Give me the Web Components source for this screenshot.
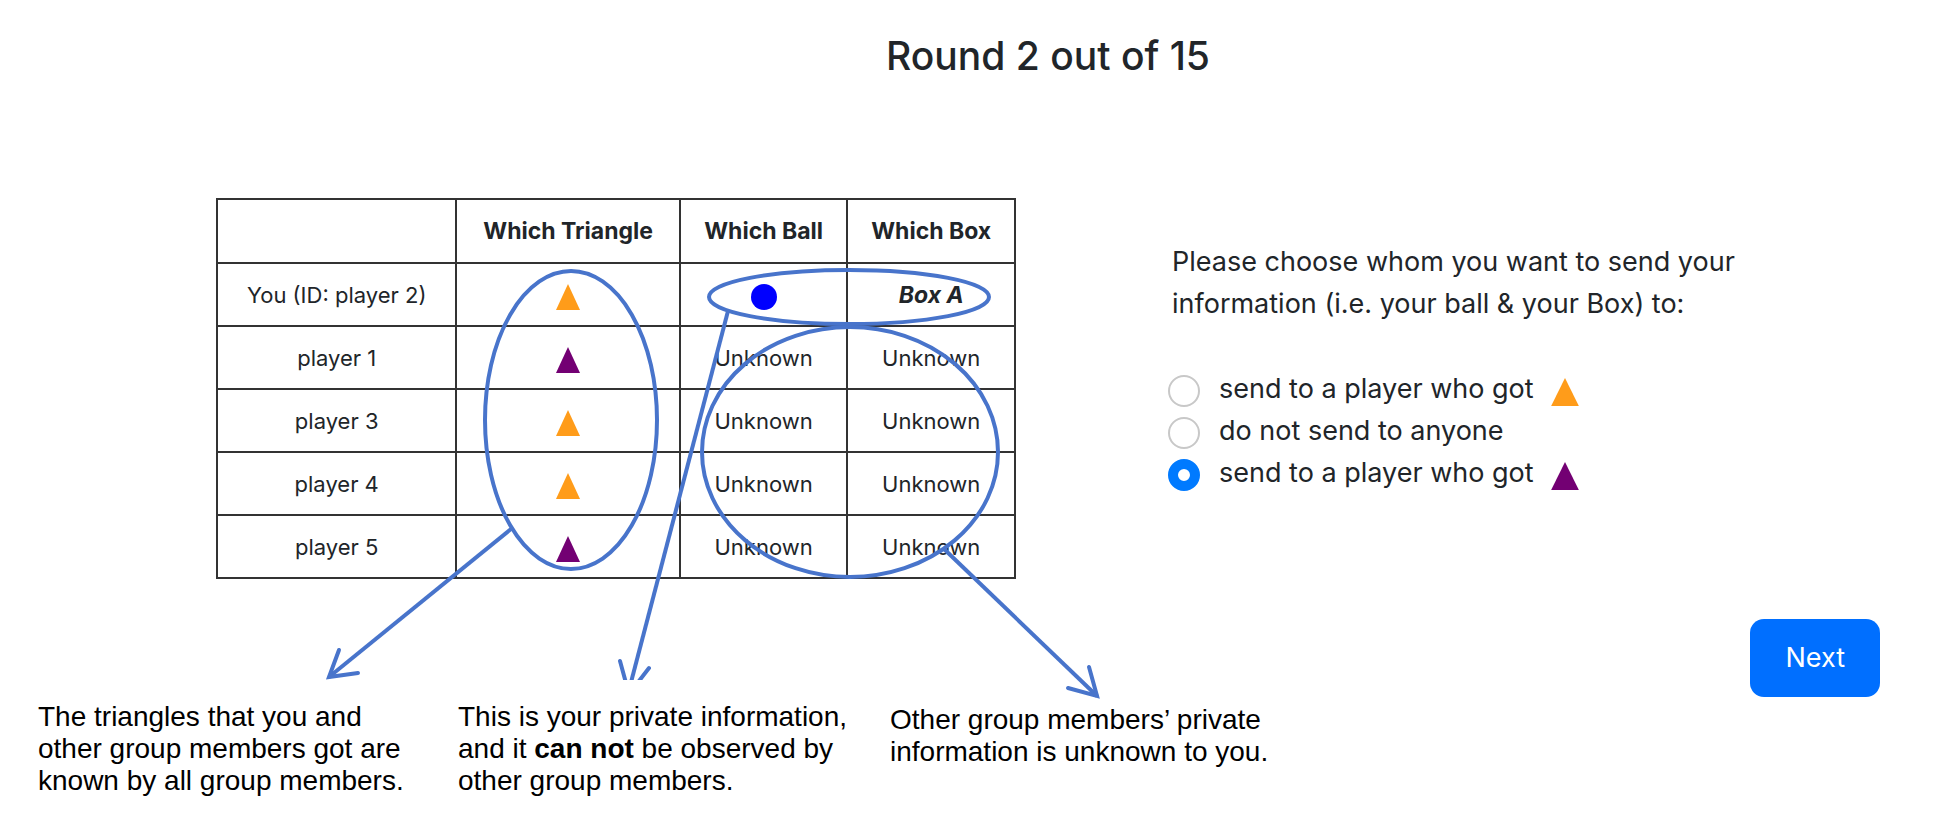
<!DOCTYPE html>
<html lang="en">
<head>
<meta charset="utf-8">
<title>Round 2 out of 15</title>
<style>
  body { margin: 0; background: #fff; }
</style>
</head>
<body>
<round-screen></round-screen>

<script>
  const define = (name, html) => {
    const template = document.createElement('template');
    template.innerHTML = html;
    customElements.define(name, class extends HTMLElement {
      constructor() {
        super();
        this.attachShadow({ mode: 'open' }).append(template.content.cloneNode(true));
      }
    });
  };

  /* Coloured triangle or ball; "kind" picks the shape and "tone" the colour. */
  customElements.define('shape-mark', class extends HTMLElement {
    connectedCallback() {
      if (this.shadowRoot) return;
      const root = this.attachShadow({ mode: 'open' });
      const shape = this.getAttribute('kind') === 'ball'
        ? '<circle cx="13" cy="13" r="13"/>'
        : '<path d="M13 0 25 26H1Z"/>';
      root.innerHTML = `
        <style>
          :host { display: inline-block; width: 26px; height: 26px; }
          :host([tone="orange"]) { color: #ff9c1a; }
          :host([tone="purple"]) { color: #730073; }
          :host([tone="blue"]) { color: #0000ff; }
          svg { display: block; width: 100%; height: 100%; fill: currentColor; }
        </style>
        <svg viewBox="0 0 26 26" preserveAspectRatio="none" aria-hidden="true">${shape}</svg>`;
    }
  });

  define('round-title', `
    <style>
      :host { display: block; text-align: center; }
      h1 { margin: 0; font-size: 39px; line-height: 50px; font-weight: 500; }
    </style>
    <h1><slot></slot></h1>`);

  customElements.define('info-table', class extends HTMLElement {
    connectedCallback() {
      if (this.shadowRoot) return;
      const players = [['player 1', 'purple'], ['player 3', 'orange'], ['player 4', 'orange'], ['player 5', 'purple']];
      const rows = players.map(([name, tone]) => `
        <tr><td>${name}</td><td><shape-mark tone="${tone}"></shape-mark></td><td>Unknown</td><td>Unknown</td></tr>`).join('');
      this.attachShadow({ mode: 'open' }).innerHTML = `
        <style>
          :host { display: block; }
          table { width: 100%; border-collapse: collapse; table-layout: fixed; font-size: 22px; line-height: 28px; text-align: center; }
          col.who { width: 30%; }
          col.triangle { width: 28%; }
          th, td { box-sizing: border-box; height: 63px; padding: 0; border: 2px solid #333; vertical-align: middle; }
          th { height: 64px; }
          th, em { font-size: 23px; font-weight: 700; }
          shape-mark { vertical-align: middle; margin-top: 4px; }
        </style>
        <table>
          <colgroup><col class="who"><col class="triangle"><col><col></colgroup>
          <thead><tr><td></td><th scope="col">Which Triangle</th><th scope="col">Which Ball</th><th scope="col">Which Box</th></tr></thead>
          <tbody>
            <tr><td>You (ID: player 2)</td><td><shape-mark tone="orange"></shape-mark></td><td><shape-mark kind="ball" tone="blue"></shape-mark></td><td><em>Box A</em></td></tr>
            ${rows}
          </tbody>
        </table>`;
    }
  });

  /* Ellipses and arrows that lie over the slotted table. */
  define('table-callouts', `
    <style>
      :host { display: block; position: relative; }
      svg { position: absolute; inset: 0; width: 100%; height: 100%; overflow: visible; pointer-events: none; fill: none; stroke: #4874cb; stroke-width: 4; }
      svg * { vector-effect: non-scaling-stroke; }
      .head { stroke-linecap: round; }
    </style>
    <slot></slot>
    <svg viewBox="0 0 800 381" preserveAspectRatio="none" aria-hidden="true">
      <clipPath id="cut"><path d="M380 100H540V482H380Z"/></clipPath>
      <ellipse cx="355" cy="222" rx="86" ry="149"/>
      <ellipse cx="633" cy="99" rx="140" ry="27"/>
      <ellipse cx="634" cy="254" rx="148" ry="125"/>
      <path d="M295 331 113 479"/>
      <path class="head" d="M123 452 113 479 142 475"/>
      <g clip-path="url(#cut)">
        <path d="M512 113 413 492"/>
        <path class="head" d="M404 463 413 496 433 470"/>
      </g>
      <path d="M727 350 881 498"/>
      <path class="head" d="M873 469 881 498 852 490"/>
    </svg>`);

  define('send-question', `
    <style>
      :host { display: block; font-size: 27px; line-height: 42px; }
      fieldset { margin: 0; padding: 0; border: 0; min-width: 0; }
      legend { padding: 0; margin-bottom: 43px; max-width: 600px; }
      .option { display: flex; align-items: center; height: 42px; margin-left: -4px; }
      input { appearance: none; box-sizing: border-box; flex: none; width: 32px; height: 32px; margin: 4px 19px 0 0; border: 2px solid #c8c8c8; border-radius: 50%; background: #fff; }
      input:checked { border: 10px solid #007aff; }
      shape-mark { width: 30px; height: 28px; margin: 6px 0 0 16px; }
    </style>
    <fieldset>
      <legend>Please choose whom you want to send your information (i.e. your ball &amp; your Box) to:</legend>
      <div class="option"><input type="radio" name="to" id="orange"><label for="orange">send to a player who got</label><shape-mark tone="orange"></shape-mark></div>
      <div class="option"><input type="radio" name="to" id="none"><label for="none">do not send to anyone</label></div>
      <div class="option"><input type="radio" name="to" id="purple" checked><label for="purple">send to a player who got</label><shape-mark tone="purple"></shape-mark></div>
    </fieldset>`);

  define('next-button', `
    <style>
      :host { display: block; }
      button { display: block; padding: 18px 35px; border: 0; border-radius: 14px; background: #006fff; color: #fff; font: inherit; font-size: 27px; line-height: 42px; }
    </style>
    <button type="button"><slot></slot></button>`);

  define('side-note', `
    <style>
      :host { display: block; font: 28px/32px "Liberation Sans", Arial, sans-serif; color: #000; }
      p { margin: 0; }
    </style>
    <p><slot></slot></p>`);

  define('round-screen', `
    <style>
      :host { display: block; padding: 31px 68px 40px 38px; font-family: Inter, "Noto Sans", sans-serif; color: #212529; }
      main { padding-left: 178px; }
      .board { display: grid; grid-template-columns: 800fr 708fr; column-gap: 156px; margin-top: 117px; }
      .side { display: flex; flex-direction: column; justify-content: space-between; align-items: flex-start; height: 499px; padding-top: 43px; box-sizing: border-box; }
      next-button { align-self: flex-end; }
      .notes { display: grid; grid-template-columns: 420fr 432fr 990fr; align-items: start; margin-top: 4px; }
      .notes :last-child { padding-top: 3px; }
    </style>
    <main>
      <round-title>Round 2 out of 15</round-title>
      <div class="board">
        <div><table-callouts><info-table></info-table></table-callouts></div>
        <div class="side">
          <send-question></send-question>
          <next-button>Next</next-button>
        </div>
      </div>
    </main>
    <section class="notes">
      <side-note>The triangles that you and<br>other group members got are<br>known by all group members.</side-note>
      <side-note>This is your private information,<br>and it <b>can not</b> be observed by<br>other group members.</side-note>
      <side-note>Other group members’ private<br>information is unknown to you.</side-note>
    </section>`);
</script>
</body>
</html>
